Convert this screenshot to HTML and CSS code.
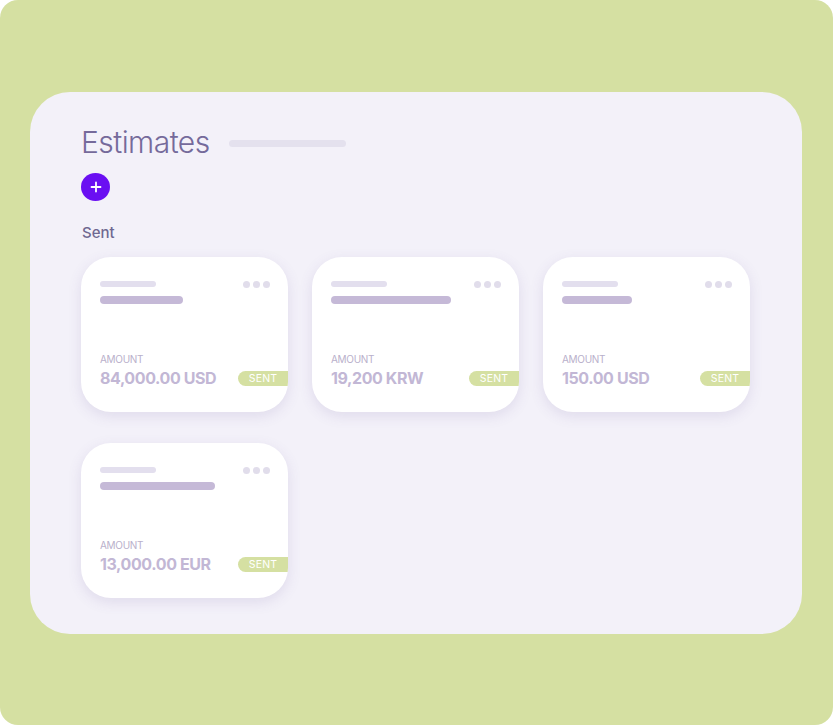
FILE: index.html
```html
<!DOCTYPE html>
<html>
<head>
<meta charset="utf-8">
<link rel="stylesheet" href="styles.css">
</head>
<body>
<div class="frame">
  <div class="panel">
    <div class="title-row">
      <h1 class="title">Estimates</h1>
      <span class="title-bar"></span>
    </div>
    <button class="add-btn" aria-label="Add">
      <svg width="12" height="12" viewBox="0 0 12 12"><path d="M6 1.5v9M1.5 6h9" stroke="#fff" stroke-width="1.8" stroke-linecap="round"/></svg>
    </button>
    <div class="section-label">Sent</div>
    <div class="grid">
      <div class="card">
        <div class="card-top">
          <div class="bars">
            <span class="bar bar-light" style="width:56px"></span>
            <span class="bar bar-dark" style="width:83px"></span>
          </div>
          <div class="dots"><i></i><i></i><i></i></div>
        </div>
        <div class="card-bottom">
          <div class="amount-label">AMOUNT</div>
          <div class="amount-row">
            <div class="amount">84,000.00 USD</div>
            <span class="badge">SENT</span>
          </div>
        </div>
      </div>
      <div class="card">
        <div class="card-top">
          <div class="bars">
            <span class="bar bar-light" style="width:56px"></span>
            <span class="bar bar-dark" style="width:120px"></span>
          </div>
          <div class="dots"><i></i><i></i><i></i></div>
        </div>
        <div class="card-bottom">
          <div class="amount-label">AMOUNT</div>
          <div class="amount-row">
            <div class="amount">19,200 KRW</div>
            <span class="badge">SENT</span>
          </div>
        </div>
      </div>
      <div class="card">
        <div class="card-top">
          <div class="bars">
            <span class="bar bar-light" style="width:56px"></span>
            <span class="bar bar-dark" style="width:70px"></span>
          </div>
          <div class="dots"><i></i><i></i><i></i></div>
        </div>
        <div class="card-bottom">
          <div class="amount-label">AMOUNT</div>
          <div class="amount-row">
            <div class="amount">150.00 USD</div>
            <span class="badge">SENT</span>
          </div>
        </div>
      </div>
      <div class="card">
        <div class="card-top">
          <div class="bars">
            <span class="bar bar-light" style="width:56px"></span>
            <span class="bar bar-dark" style="width:115px"></span>
          </div>
          <div class="dots"><i></i><i></i><i></i></div>
        </div>
        <div class="card-bottom">
          <div class="amount-label">AMOUNT</div>
          <div class="amount-row">
            <div class="amount">13,000.00 EUR</div>
            <span class="badge">SENT</span>
          </div>
        </div>
      </div>
    </div>
  </div>
</div>
</body>
</html>
```
FILE: styles.css
```css
* { box-sizing: border-box; }
html, body { margin: 0; padding: 0; background: #ffffff; }
body { font-family: Inter, "Noto Sans", sans-serif; }
.frame {
  width: 833px;
  height: 725px;
  background: #d5e0a2;
  border-radius: 18px;
  padding: 92px 31px 0 30px;
}
.panel {
  width: 772px;
  height: 542px;
  background: #f3f1f9;
  border-radius: 40px;
  padding: 30px 0 0 51px;
}
.title-row {
  display: flex;
  align-items: center;
  gap: 19px;
  height: 40px;
}
.title {
  margin: 0;
  font-size: 30px;
  font-weight: 300;
  color: #756a9b;
  letter-spacing: -0.55px;
  line-height: 40px;
}
.title-bar {
  width: 117px;
  height: 7px;
  border-radius: 4px;
  background: #e4e1ee;
  margin-top: 2px;
}
.add-btn {
  display: flex;
  align-items: center;
  justify-content: center;
  width: 29px;
  height: 28px;
  margin-top: 11px;
  padding: 0;
  border: 0;
  border-radius: 50%;
  background: #6a0ff2;
}
.section-label {
  margin-top: 22px;
  margin-left: 1px;
  font-size: 15px;
  font-weight: 500;
  color: #6f6891;
  line-height: 20px;
}
.grid {
  margin-top: 14px;
  display: grid;
  grid-template-columns: repeat(3, 207px);
  column-gap: 24px;
  row-gap: 31px;
}
.card {
  height: 155px;
  background: #ffffff;
  border-radius: 30px;
  box-shadow: 0 4px 14px rgba(90, 70, 150, 0.13);
  padding: 24px 18px 0 19px;
  overflow: hidden;
  display: flex;
  flex-direction: column;
  justify-content: space-between;
}
.card-top {
  display: flex;
  justify-content: space-between;
  align-items: flex-start;
}
.bars {
  display: flex;
  flex-direction: column;
  gap: 9px;
}
.bar { display: block; border-radius: 4px; }
.bar-light { height: 6px; background: #e3dfee; }
.bar-dark { height: 8px; background: #c5b9d7; }
.dots { display: flex; gap: 3px; margin-top: 0; }
.dots i {
  display: block;
  width: 7px;
  height: 7px;
  border-radius: 50%;
  background: #e1ddeb;
}
.card-bottom { padding-bottom: 24px; }
.amount-label {
  font-size: 10px;
  color: #b9b0cb;
  line-height: 12px;
  letter-spacing: -0.3px;
}
.amount-row {
  display: flex;
  justify-content: space-between;
  align-items: center;
  margin-top: 3px;
  margin-right: -18px;
}
.amount {
  font-size: 16px;
  font-weight: 700;
  color: #c2b7d5;
  line-height: 20px;
  letter-spacing: -0.4px;
}
.badge {
  display: flex;
  align-items: center;
  justify-content: center;
  width: 50px;
  height: 15px;
  border-radius: 8px 0 0 8px;
  background: #d5e0a2;
  color: #ffffff;
  font-size: 10.5px;
  font-weight: 400;
  letter-spacing: 0.2px;
}
```
